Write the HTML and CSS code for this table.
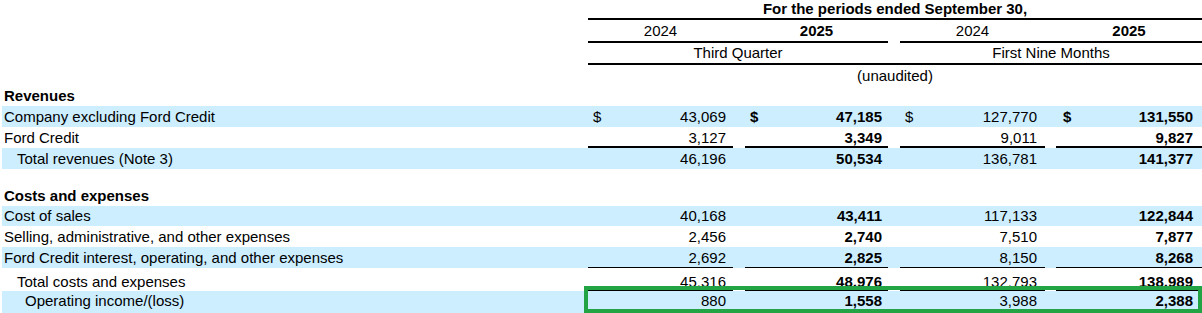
FILE: index.html
```html
<!DOCTYPE html>
<html lang="en">
<head>
<meta charset="utf-8">
<title>Income statement</title>
<link rel="stylesheet" href="styles.css">
</head>
<body>
<div class="stmt">
  <div class="row h1">
    <div class="lbl"></div>
    <div class="c-all bold rule2">For the periods ended September 30,</div>
  </div>
  <div class="row h2">
    <div class="lbl"></div>
    <div class="ca center rule2">2024</div>
    <div class="g1 rule2"></div>
    <div class="cb center bold rule2">2025</div>
    <div class="cc center rule2">2024</div>
    <div class="g3 rule2"></div>
    <div class="cd center bold rule2">2025</div>
  </div>
  <div class="row h3">
    <div class="lbl"></div>
    <div class="c-ab center rule2">Third Quarter</div>
    <div class="g2 rule2"></div>
    <div class="c-cd center rule2">First Nine Months</div>
  </div>
  <div class="row h4">
    <div class="lbl"></div>
    <div class="c-all center">(unaudited)</div>
  </div>

  <div class="row"><div class="lbl bold">Revenues</div></div>
  <div class="row blue">
    <div class="lbl">Company excluding Ford Credit</div>
    <div class="ca val"><span class="cur">$</span><span>43,069</span></div>
    <div class="cb val bold"><span class="cur">$</span><span>47,185</span></div>
    <div class="cc val"><span class="cur">$</span><span>127,770</span></div>
    <div class="cd val bold"><span class="cur">$</span><span>131,550</span></div>
  </div>
  <div class="row">
    <div class="lbl">Ford Credit</div>
    <div class="ca val rule2"><span>3,127</span></div>
    <div class="cb val bold rule2"><span>3,349</span></div>
    <div class="cc val rule2"><span>9,011</span></div>
    <div class="cd val bold rule2"><span>9,827</span></div>
  </div>
  <div class="row blue">
    <div class="lbl ind1">Total revenues (Note 3)</div>
    <div class="ca val"><span>46,196</span></div>
    <div class="cb val bold"><span>50,534</span></div>
    <div class="cc val"><span>136,781</span></div>
    <div class="cd val bold"><span>141,377</span></div>
  </div>
  <div class="row spacer"></div>

  <div class="row"><div class="lbl bold">Costs and expenses</div></div>
  <div class="row blue short">
    <div class="lbl">Cost of sales</div>
    <div class="ca val"><span>40,168</span></div>
    <div class="cb val bold"><span>43,411</span></div>
    <div class="cc val"><span>117,133</span></div>
    <div class="cd val bold"><span>122,844</span></div>
  </div>
  <div class="row">
    <div class="lbl">Selling, administrative, and other expenses</div>
    <div class="ca val"><span>2,456</span></div>
    <div class="cb val bold"><span>2,740</span></div>
    <div class="cc val"><span>7,510</span></div>
    <div class="cd val bold"><span>7,877</span></div>
  </div>
  <div class="row blue">
    <div class="lbl">Ford Credit interest, operating, and other expenses</div>
    <div class="ca val rule1"><span>2,692</span></div>
    <div class="cb val bold rule1"><span>2,825</span></div>
    <div class="cc val rule1"><span>8,150</span></div>
    <div class="cd val bold rule1"><span>8,268</span></div>
  </div>
  <div class="row tall">
    <div class="lbl ind1">Total costs and expenses</div>
    <div class="ca val rule1"><span>45,316</span></div>
    <div class="cb val bold rule1"><span>48,976</span></div>
    <div class="cc val rule1"><span>132,793</span></div>
    <div class="cd val bold rule1"><span>138,989</span></div>
  </div>
  <div class="row blue op">
    <div class="lbl ind2">Operating income/(loss)</div>
    <div class="ca val"><span>880</span></div>
    <div class="cb val bold"><span>1,558</span></div>
    <div class="cc val"><span>3,988</span></div>
    <div class="cd val bold"><span>2,388</span></div>
    <div class="highlight"></div>
  </div>
</div>
</body>
</html>
```

FILE: styles.css
```css
* { box-sizing: border-box; }

html, body {
  margin: 0;
  padding: 0;
  background: #ffffff;
}

body {
  font-family: "Liberation Sans", Arial, sans-serif;
  font-size: 15px;
  color: #000000;
  overflow: hidden;
}

.stmt {
  padding-left: 2px;
  width: 1202px;
}

.row {
  display: grid;
  grid-template-columns: 586px 145px 12px 143px 12px 145px 11px 146px;
  grid-template-rows: 21px;
  height: 21px;
  line-height: 21px;
  white-space: nowrap;
}

.row.h1 { height: 20px; grid-template-rows: 20px; line-height: 17px; }
.row.h2 { height: 23px; grid-template-rows: 23px; line-height: 21px; }
.row.h3 { height: 22px; grid-template-rows: 22px; line-height: 20px; }
.row.h4 { height: 20px; grid-template-rows: 20px; line-height: 22px; }
.row.spacer { height: 16px; grid-template-rows: 16px; }
.row.short { height: 20px; grid-template-rows: 20px; line-height: 20px; }
.row.tall { height: 23px; grid-template-rows: 23px; line-height: 21px; }
.row.tall > div { padding-top: 3px; }
.row.op { position: relative; height: 22px; grid-template-rows: 22px; line-height: 20px; }

.blue { background: #cceeff; }

.lbl { grid-column: 1; padding-left: 2px; }
.ind1 { padding-left: 15px; }
.ind2 { padding-left: 23px; }

.bold { font-weight: bold; }
.center { text-align: center; }

.ca { grid-column: 2; }
.g1 { grid-column: 3; }
.cb { grid-column: 4; }
.g2 { grid-column: 5; }
.cc { grid-column: 6; }
.g3 { grid-column: 7; }
.cd { grid-column: 8; }
.c-all { grid-column: 2 / 9; text-align: center; }
.c-ab { grid-column: 2 / 5; }
.c-cd { grid-column: 6 / 9; }

.rule2 { border-bottom: 2px solid #000000; }
.rule1 { border-bottom: 1px solid #000000; }

.val {
  display: flex;
  justify-content: flex-end;
  padding-left: 5px;
  padding-right: 7px;
}
.cd.val { padding-left: 7px; padding-right: 9px; }
.cc.val { padding-right: 8px; }
.cb.val { padding-right: 6px; }
.val .cur { margin-right: auto; }

.highlight {
  position: absolute;
  left: 582px;
  top: -5px;
  width: 618px;
  height: 27px;
  border: 4px solid #22a444;
  pointer-events: none;
}
```
